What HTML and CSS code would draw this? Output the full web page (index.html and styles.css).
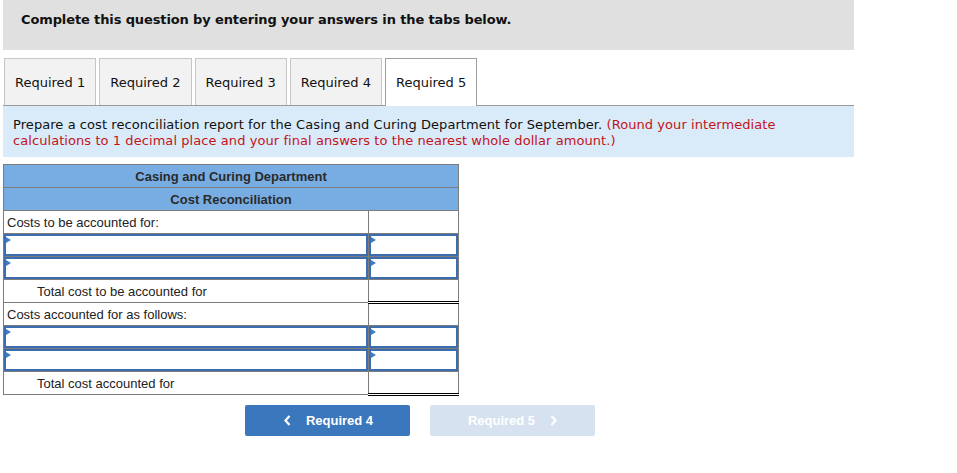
FILE: index.html
```html
<!DOCTYPE html>
<html>
<head>
<meta charset="utf-8">
<link rel="stylesheet" href="styles.css">
</head>
<body>
<div class="page">
  <div class="banner">Complete this question by entering your answers in the tabs below.</div>
  <div class="tabs">
    <div class="tab">Required 1</div>
    <div class="tab">Required 2</div>
    <div class="tab">Required 3</div>
    <div class="tab">Required 4</div>
    <div class="tab active">Required 5</div>
  </div>
  <div class="instructions">Prepare a cost reconciliation report for the Casing and Curing Department for September. <span class="note">(Round your intermediate calculations to 1 decimal place and your final answers to the nearest whole dollar amount.)</span></div>
  <table class="report">
    <colgroup><col class="c-label"><col class="c-amt"></colgroup>
    <tr><th colspan="2">Casing and Curing Department</th></tr>
    <tr><th colspan="2">Cost Reconciliation</th></tr>
    <tr><td class="label">Costs to be accounted for:</td><td></td></tr>
    <tr><td class="in"><div class="field"></div></td><td class="in"><div class="field"></div></td></tr>
    <tr><td class="in"><div class="field"></div></td><td class="in"><div class="field"></div></td></tr>
    <tr><td class="label indent">Total cost to be accounted for</td><td class="total"></td></tr>
    <tr><td class="label">Costs accounted for as follows:</td><td></td></tr>
    <tr><td class="in"><div class="field"></div></td><td class="in"><div class="field"></div></td></tr>
    <tr><td class="in"><div class="field"></div></td><td class="in"><div class="field"></div></td></tr>
    <tr><td class="label indent">Total cost accounted for</td><td class="total"></td></tr>
  </table>
  <div class="nav">
    <div class="btn prev"><svg class="chev" width="7" height="11" viewBox="0 0 7 11"><path d="M5.5 1 L1.5 5.5 L5.5 10" fill="none" stroke="#fff" stroke-width="2.2"/></svg><span>Required 4</span></div>
    <div class="btn next disabled"><span>Required 5</span><svg class="chev" width="7" height="11" viewBox="0 0 7 11"><path d="M1.5 1 L5.5 5.5 L1.5 10" fill="none" stroke="#fff" stroke-width="2.2"/></svg></div>
  </div>
</div>
</body>
</html>
```

FILE: styles.css
```css
html, body { margin: 0; padding: 0; background: #fff; }
body { font-family: "DejaVu Sans", Verdana, sans-serif; color: #111; }
.page { margin-left: 3px; width: 851px; }

.banner {
  background: #e0e0e0;
  height: 50px;
  box-sizing: border-box;
  padding: 12px 0 0 18px;
  font-size: 13px;
  line-height: 16px;
  font-weight: bold;
  letter-spacing: -0.12px;
  color: #111;
}

.tabs {
  display: flex;
  gap: 3px;
  margin-top: 8px;
  padding-left: 1px;
  border-bottom: 1px solid #9a9a9a;
  height: 47px;
}
.tab {
  width: 92.25px;
  height: 47px;
  box-sizing: border-box;
  border: 1px solid #c6c6c6;
  border-bottom: none;
  background: #f2f2f2;
  font-size: 13px;
  line-height: 16px;
  display: flex;
  align-items: center;
  justify-content: center;
  padding-top: 1px;
  color: #111;
}
.tab.active {
  background: #fff;
  border-color: #a0a0a0;
  height: 48px;
  padding-top: 0;
}

.instructions {
  background: #d9ebf9;
  padding: 11px 10px 8px 10px;
  font-size: 13px;
  line-height: 16px;
  letter-spacing: 0.07px;
  color: #111;
}
.instructions .note { color: #c4131b; }

.report {
  margin-top: 7px;
  border-collapse: collapse;
  width: 455px;
  font-family: "Liberation Sans", Arial, sans-serif;
  table-layout: fixed;
}
.report tr { height: 23px; }
.c-label { width: 365px; }
.c-amt { width: 90px; }
.report th {
  background: #78ade3;
  border: 1px solid #7c7c7c;
  padding: 0;
  font-size: 13px;
  line-height: 15px;
  font-weight: bold;
  color: #2a2a2a;
  text-align: center;
}
.report td {
  border: 1px solid #7c7c7c;
  padding: 0;
  font-size: 13px;
  line-height: 15px;
  color: #222;
  vertical-align: middle;
}
.report td.label { padding-left: 3px; }
.report td.indent { padding-left: 33px; }
.report td.in { padding: 0; vertical-align: top; }
.field {
  height: 22px;
  box-sizing: border-box;
  border: 2px solid #3b6db0;
  position: relative;
  background: #fff;
}
.field::before {
  content: "";
  position: absolute;
  left: 0;
  top: 1px;
  border-top: 3px solid transparent;
  border-bottom: 3px solid transparent;
  border-left: 5px solid #3f7cc6;
}
.report td.total {
  border-top: 1px solid #000;
  border-bottom: 3px double #000;
}

.nav {
  display: flex;
  gap: 20px;
  margin-top: 9px;
  margin-left: 242px;
}
.btn {
  width: 165px;
  height: 31px;
  border-radius: 2px;
  background: #3a77bd;
  color: #fff;
  font-family: "Liberation Sans", Arial, sans-serif;
  font-weight: bold;
  font-size: 13px;
  display: flex;
  align-items: center;
  justify-content: center;
  gap: 15px;
}
.btn.disabled { background: #d6e2f0; }
.btn.prev { padding-left: 2px; box-sizing: border-box; }
```
